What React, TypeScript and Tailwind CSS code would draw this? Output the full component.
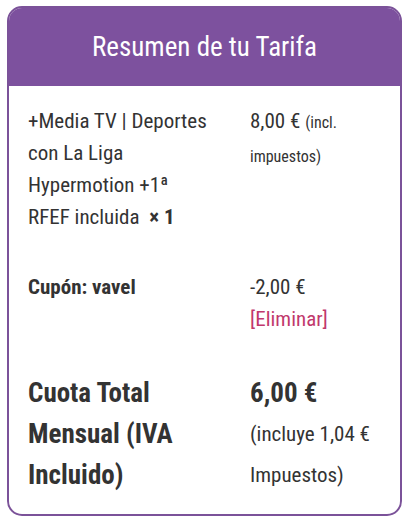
import React from "react";

const font = { fontFamily: '"Roboto Condensed", Roboto, "Liberation Sans", sans-serif' };

export default function App() {
  return (
    <div className="min-h-screen bg-white pt-[6px] pl-[7px]" style={font}>
      <div className="w-[395px] overflow-hidden rounded-[15px] border-2 border-[#7b5299] bg-white text-[#333333]">
        <div className="flex h-[78px] items-center justify-center bg-[#7d519e]">
          <h2 className="text-[27px] font-normal leading-none text-white">Resumen de tu Tarifa</h2>
        </div>

        <div className="grid grid-cols-[222px_1fr] px-[19px]">
          {/* product line */}
          <div className="py-[19px] pr-[38px] text-[21px] leading-[32px]">
            +Media TV | Deportes con La Liga Hypermotion +1ª RFEF incluida&nbsp; <strong className="font-bold">× 1</strong>
          </div>
          <div className="py-[19px] pr-[10px] text-[21px] leading-[32px]">
            8,00 € <small className="text-[16px] leading-[32px]">(incl. impuestos)</small>
          </div>

          {/* coupon */}
          <div className="py-[19px] text-[21px] font-bold leading-[32px]">Cupón: vavel</div>
          <div className="py-[19px] text-[21px] leading-[32px]">
            <div>-2,00 €</div>
            <a href="#" className="block text-[#c1386d]">[Eliminar]</a>
          </div>

          {/* total */}
          <div className="pb-[18px] pt-[19px] pr-[26px] text-[27px] font-bold leading-[41px]">
            Cuota Total Mensual (IVA Incluido)
          </div>
          <div className="pb-[18px] pt-[19px]">
            <div className="text-[27px] font-bold leading-[41px]">6,00 €</div>
            <div className="pr-[10px] text-[21px] leading-[41px]">(incluye 1,04 € Impuestos)</div>
          </div>
        </div>
      </div>
    </div>
  );
}
